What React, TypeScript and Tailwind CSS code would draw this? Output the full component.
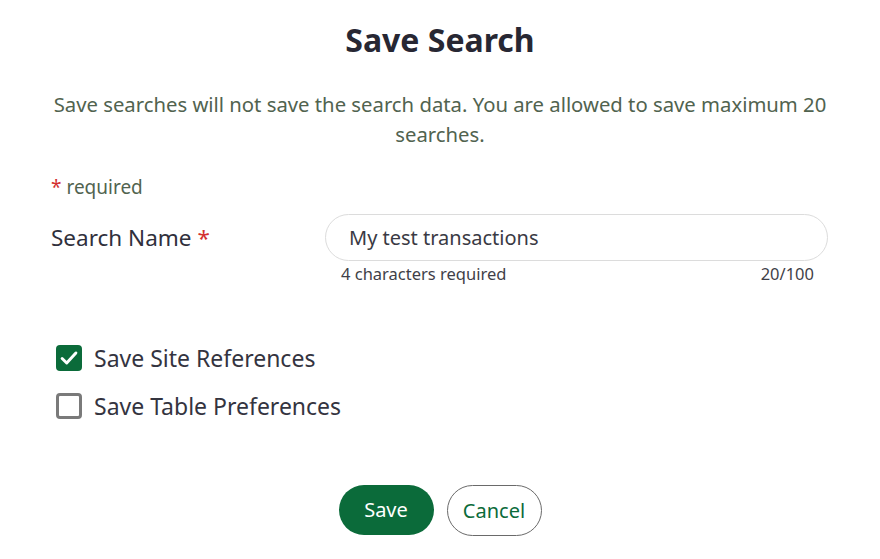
import { useState } from "react";

const font = { fontFamily: '"Noto Sans", "Open Sans", sans-serif' };

function CheckRow({
  label,
  checked,
  onToggle,
}: {
  label: string;
  checked: boolean;
  onToggle: () => void;
}) {
  return (
    <label className="flex items-center gap-3 cursor-pointer" onClick={onToggle}>
      {checked ? (
        <span className="flex h-[26px] w-[26px] items-center justify-center rounded-[4px] bg-[#0b6b3a]">
          <svg viewBox="0 0 24 24" className="h-[22px] w-[22px]" fill="none" stroke="white" strokeWidth="3.2" strokeLinecap="round" strokeLinejoin="round">
            <path d="M4.5 12.5l5 5L19.5 6.5" />
          </svg>
        </span>
      ) : (
        <span className="h-[26px] w-[26px] rounded-[4px] border-[3px] border-[#7a7a7a] bg-white" />
      )}
      <span className="text-[23px] leading-[26px] text-[#34343f]">{label}</span>
    </label>
  );
}

export default function App() {
  const [name, setName] = useState("My test transactions");
  const [site, setSite] = useState(true);
  const [table, setTable] = useState(false);

  return (
    <div className="min-h-[559px] w-[880px] bg-white" style={font}>
      <h1 className="pt-[20px] text-center text-[32px] font-bold leading-[40px] text-[#272733]">Save Search</h1>

      <p className="mx-auto mt-[29px] w-[800px] text-center text-[20.3px] leading-[30px] text-[#51634f]">
        Save searches will not save the search data. You are allowed to save maximum 20 searches.
      </p>

      <div className="mt-[26px] pl-[51px] text-[19px] leading-[24px] text-[#51634f]">
        <span className="text-[#d32f2f]">*</span> required
      </div>

      <div className="mt-[15px] flex pl-[51px] pr-[52px]">
        <div className="w-[274px] pt-[10px] text-[22.5px] leading-[28px] text-[#30303c]">
          Search Name <span className="text-[#d32f2f]">*</span>
        </div>
        <div className="flex-1">
          <input
            value={name}
            onChange={(e) => setName(e.target.value)}
            className="h-[47px] w-full rounded-full border border-[#dcdcdc] px-[23px] text-[20px] text-[#3a3a44] outline-none"
            style={font}
          />
          <div className="mt-[3px] flex justify-between pl-[16px] pr-[14px] text-[16.5px] leading-[20px] text-[#3f3f48]">
            <span>4 characters required</span>
            <span>{name.length}/100</span>
          </div>
        </div>
      </div>

      <div className="mt-[61px] flex flex-col gap-[22px] pl-[56px]">
        <CheckRow label="Save Site References" checked={site} onToggle={() => setSite(!site)} />
        <CheckRow label="Save Table Preferences" checked={table} onToggle={() => setTable(!table)} />
      </div>

      <div className="mt-[66px] flex justify-center gap-[13px] pb-[23px]">
        <button className="h-[50px] w-[95px] rounded-full bg-[#0b6b3a] text-[20px] text-white" style={font}>
          Save
        </button>
        <button className="h-[51px] w-[95px] rounded-full border border-[#6a6a6a] bg-white text-[20px] text-[#0b6b3a]" style={font}>
          Cancel
        </button>
      </div>
    </div>
  );
}
